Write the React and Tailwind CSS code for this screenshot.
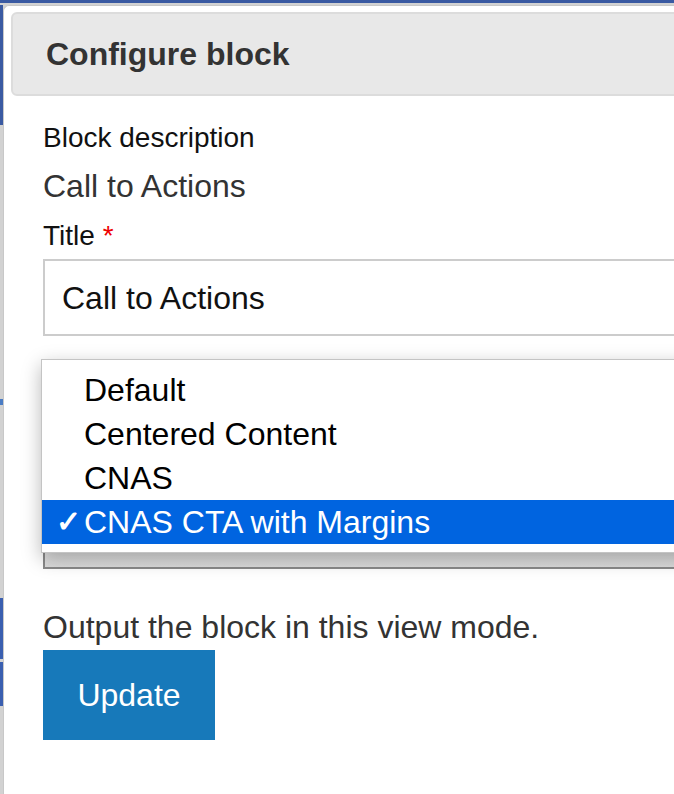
import React from "react";

const OPTIONS = [
  { label: "Default" },
  { label: "Centered Content" },
  { label: "CNAS" },
  { label: "CNAS CTA with Margins", selected: true },
];

function LeftStrip() {
  // bits of the page behind the dialog
  return (
    <div className="flex w-[3px] shrink-0 flex-col bg-[#d2d2d2]">
      <div className="h-[120px] bg-[#3a5aa2]" />
      <div className="h-[274px]" />
      <div className="h-[6px] bg-[#4a7cc4]" />
      <div className="h-[193px]" />
      <div className="h-[61px] bg-[#3a5fb0]" />
      <div className="h-[3px]" />
      <div className="h-[44px] bg-[#3a5fb0]" />
    </div>
  );
}

function ViewModeField() {
  return (
    <div className="relative mt-[23px]">
      <div className="h-[140px]" />
      <div className="h-[70px] w-[700px] border-2 border-[#8a8a8a] bg-gradient-to-b from-[#f2f2f2] to-[#dcdcdc]" />
      <div className="absolute left-[-2px] top-0 w-[700px] border border-[#c4c4c4] bg-white pb-[8px] pt-[8px] shadow-[0_6px_18px_rgba(0,0,0,0.28)]">
        {OPTIONS.map((o) => (
          <div
            key={o.label}
            className={
              "relative flex h-[44px] items-center pl-[42px] text-[32px] leading-none " +
              (o.selected ? "bg-[#0064e0] text-white" : "text-black")
            }
          >
            {o.selected && <span className="absolute left-[14px] text-[30px] font-bold">✓</span>}
            {o.label}
          </div>
        ))}
      </div>
    </div>
  );
}

export default function App() {
  return (
    <div
      className="flex h-[794px] w-[674px] flex-col overflow-hidden bg-[#d2d2d2]"
      style={{ fontFamily: '"Liberation Sans", Arial, sans-serif' }}
    >
      <div className="h-[3px] shrink-0 bg-[#3a5aa2]" />
      <div className="flex flex-1 pt-[2px]">
        <LeftStrip />
        <div className="flex-1 rounded-tl-[6px] border-l border-t border-[#c8c8c8] bg-white pl-[7px] pt-[6px]">
          <div className="flex h-[84px] w-[720px] items-center rounded-[6px] border-2 border-[#dcdcdc] bg-[#e8e8e8] pl-[33px]">
            <h1 className="text-[32px] font-bold text-[#333]">Configure block</h1>
          </div>

          <div className="pl-[32px]">
            <div className="mt-[24px] text-[28px] leading-[36px] text-[#111]">Block description</div>
            <div className="mt-[10px] text-[32px] leading-[40px] text-[#333]">Call to Actions</div>
            <div className="mt-[12px] text-[28px] leading-[36px] text-[#111]">
              Title <span className="text-[#e00]">*</span>
            </div>
            <div className="mt-[5px] flex h-[77px] w-[700px] items-center border-2 border-[#cccccc] bg-white pl-[17px] text-[32px] text-[#111]">
              Call to Actions
            </div>

            <ViewModeField />

            <div className="mt-[38px] text-[32px] leading-[40px] text-[#333]">
              Output the block in this view mode.
            </div>
            <button className="mt-[3px] h-[90px] w-[172px] bg-[#1779ba] text-[32px] text-white">
              Update
            </button>
          </div>
        </div>
      </div>
    </div>
  );
}
